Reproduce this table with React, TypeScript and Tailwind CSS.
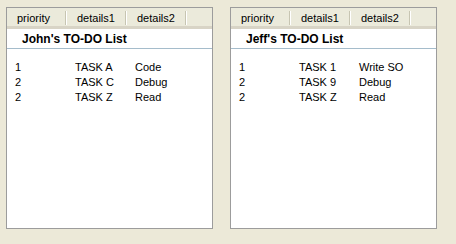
import React from 'react';

type Task = { priority: string; details1: string; details2: string };

const lists: { title: string; tasks: Task[] }[] = [
  {
    title: "John's TO-DO List",
    tasks: [
      { priority: '1', details1: 'TASK A', details2: 'Code' },
      { priority: '2', details1: 'TASK C', details2: 'Debug' },
      { priority: '2', details1: 'TASK Z', details2: 'Read' },
    ],
  },
  {
    title: "Jeff's TO-DO List",
    tasks: [
      { priority: '1', details1: 'TASK 1', details2: 'Write SO' },
      { priority: '2', details1: 'TASK 9', details2: 'Debug' },
      { priority: '2', details1: 'TASK Z', details2: 'Read' },
    ],
  },
];

const HeaderCell: React.FC<{ label: string }> = ({ label }) => (
  <div className="w-[60px] h-full flex items-center justify-between pt-[2px]">
    <span className="pl-[10px]">{label}</span>
    <span className="w-[2px] h-[14px] border-l border-[#c7c5b2] border-r border-r-white" />
  </div>
);

const TodoList: React.FC<{ title: string; tasks: Task[] }> = ({ title, tasks }) => (
  <div className="w-[207px] h-[222px] border border-[#9c9c9c] bg-white flex flex-col">
    <div className="h-[21px] bg-[#ebeadb] border-b-[3px] border-[#d8d4c6] flex items-center text-[#000]">
      <HeaderCell label="priority" />
      <HeaderCell label="details1" />
      <HeaderCell label="details2" />
    </div>
    <div className="h-[20px] flex items-center pl-[15px] font-bold text-[12px] border-b border-[#a5bccb]">
      {title}
    </div>
    <div className="pt-[11px] pl-[8px]">
      {tasks.map((t, i) => (
        <div key={i} className="h-[15px] flex items-center">
          <span className="w-[60px]">{t.priority}</span>
          <span className="w-[60px]">{t.details1}</span>
          <span>{t.details2}</span>
        </div>
      ))}
    </div>
  </div>
);

export default function App() {
  return (
    <div className="w-[456px] h-[244px] bg-[#ece9d8] flex gap-[17px] pl-[6px] pt-[7px] text-[11px] text-black font-['Liberation_Sans',Arial,sans-serif]">
      {lists.map((l, i) => (
        <TodoList key={i} title={l.title} tasks={l.tasks} />
      ))}
    </div>
  );
}
